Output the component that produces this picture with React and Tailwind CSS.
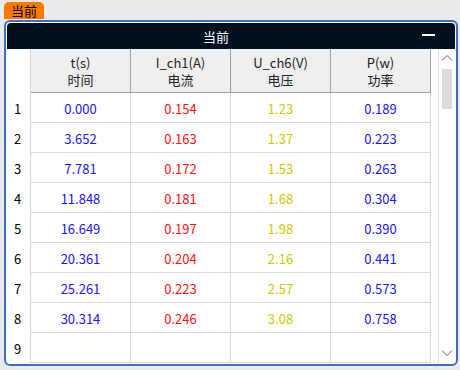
import React from "react";

const rows = [
  ["0.000", "0.154", "1.23", "0.189"],
  ["3.652", "0.163", "1.37", "0.223"],
  ["7.781", "0.172", "1.53", "0.263"],
  ["11.848", "0.181", "1.68", "0.304"],
  ["16.649", "0.197", "1.98", "0.390"],
  ["20.361", "0.204", "2.16", "0.441"],
  ["25.261", "0.223", "2.57", "0.573"],
  ["30.314", "0.246", "3.08", "0.758"],
  ["", "", "", ""],
];

const headers = [
  ["t(s)", "时间"],
  ["I_ch1(A)", "电流"],
  ["U_ch6(V)", "电压"],
  ["P(w)", "功率"],
];

const colors = ["text-[#1a14ff]", "text-[#ff1010]", "text-[#d0c800]", "text-[#1a14ff]"];

export default function App() {
  return (
    <div
      className="w-[460px] h-[370px] bg-[#ebebeb] pt-[2px] px-[4px] text-[13px] text-[#1a1a1a]"
      style={{ fontFamily: '"Noto Sans CJK SC", "Noto Sans", sans-serif' }}
    >
      <div className="w-[40px] h-[17px] bg-[#ff7800] rounded-t-[5px] leading-[17px] pl-[7px] text-black">当前</div>
      <div className="mt-[1px] w-[454px] border-2 border-[#3c6fbf] rounded-[6px] bg-white p-px">
        <div className="relative h-[26px] bg-[#00101f] rounded-t-[4px] flex items-center justify-center pr-[30px] pt-[2px] text-white">
          <span className="leading-[16px]">当前</span>
          <span className="absolute left-[415px] top-[11px] w-[13px] h-[2px] bg-white"></span>
        </div>
        <div className="flex">
          <div className="flex-1">
            <div className="grid grid-cols-[24px_100px_100px_100px_100px]">
              <div className="h-[44px] border-r border-[#d6d6d6]"></div>
              {headers.map((h, i) => (
                <div
                  key={i}
                  className="h-[44px] bg-[#efefef] border-r border-b border-[#a0a0a0] flex flex-col items-center justify-center pt-[2px] leading-[16px] gap-px text-[#222]"
                >
                  <span>{h[0]}</span>
                  <span>{h[1]}</span>
                </div>
              ))}
              {rows.map((r, ri) => (
                <React.Fragment key={ri}>
                  <div className="h-[30px] border-r border-[#d6d6d6] flex items-center pl-[7px] pt-[2px] text-black">
                    {ri + 1}
                  </div>
                  {r.map((v, ci) => (
                    <div
                      key={ci}
                      className={`h-[30px] border-r border-b border-[#d9d9d9] flex items-center justify-center pt-[2px] ${colors[ci]}`}
                    >
                      {v}
                    </div>
                  ))}
                </React.Fragment>
              ))}
            </div>
          </div>
          <div className="w-[17px] border-l border-[#dcdcdc] flex flex-col items-center">
            <svg width="12" height="8" viewBox="0 0 12 8" className="mt-[5px]">
              <polyline points="1,6.5 6,1.5 11,6.5" fill="none" stroke="#606060" strokeWidth="1" />
            </svg>
            <div className="mt-[7px] w-[10px] h-[40px] bg-[#dadada]"></div>
            <div className="flex-1"></div>
            <svg width="12" height="8" viewBox="0 0 12 8" className="mb-[6px]">
              <polyline points="1,1.5 6,6.5 11,1.5" fill="none" stroke="#606060" strokeWidth="1" />
            </svg>
          </div>
        </div>
      </div>
    </div>
  );
}
